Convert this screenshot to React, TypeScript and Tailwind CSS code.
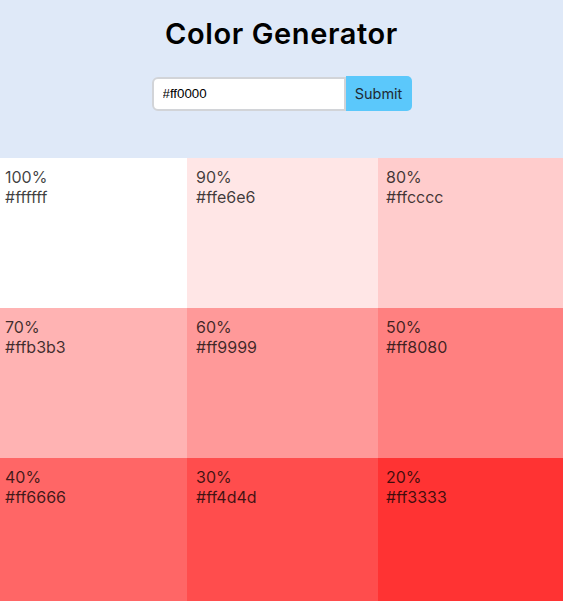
import React from "react";

const tiles = [
  { p: "100%", hex: "#ffffff", bg: "bg-[#ffffff] pl-[5px]" },
  { p: "90%", hex: "#ffe6e6", bg: "bg-[#ffe6e6] pl-[9px]" },
  { p: "80%", hex: "#ffcccc", bg: "bg-[#ffcccc] pl-[8px]" },
  { p: "70%", hex: "#ffb3b3", bg: "bg-[#ffb3b3] pl-[5px]" },
  { p: "60%", hex: "#ff9999", bg: "bg-[#ff9999] pl-[9px]" },
  { p: "50%", hex: "#ff8080", bg: "bg-[#ff8080] pl-[8px]" },
  { p: "40%", hex: "#ff6666", bg: "bg-[#ff6666] pl-[5px]" },
  { p: "30%", hex: "#ff4d4d", bg: "bg-[#ff4d4d] pl-[9px]" },
  { p: "20%", hex: "#ff3333", bg: "bg-[#ff3333] pl-[8px]" },
];

export default function App() {
  return (
    <div className="w-[563px] h-[601px] overflow-hidden font-['Inter',sans-serif]">
      <header className="h-[158px] bg-[#dfe9f8] flex flex-col items-center pt-[15px]">
        <h1 className="text-[29px] font-semibold leading-[38px] text-black tracking-[0.6px]">Color Generator</h1>
        <form className="mt-[23px] flex items-center" onSubmit={(e) => e.preventDefault()}>
          <input
            defaultValue="#ff0000"
            className="w-[194px] h-[34px] border-2 border-[#d2d4d8] rounded-l-[6px] bg-white pl-[9px] pr-[8px] text-[13.3px] font-['Liberation_Sans',sans-serif] text-black outline-none"
          />
          <button className="h-[35px] w-[66px] bg-[#5bc8fb] rounded-r-[5px] text-[14.5px] text-[#1f2a33] font-['Inter',sans-serif]">
            Submit
          </button>
        </form>
      </header>
      <div className="grid grid-cols-[187px_191px_185px]">
        {tiles.map((t) => (
          <div key={t.hex} className={`${t.bg} h-[150px] pt-[9px] text-[16px] leading-[20px] text-black/75`}>
            <div>{t.p}</div>
            <div>{t.hex}</div>
          </div>
        ))}
      </div>
    </div>
  );
}
